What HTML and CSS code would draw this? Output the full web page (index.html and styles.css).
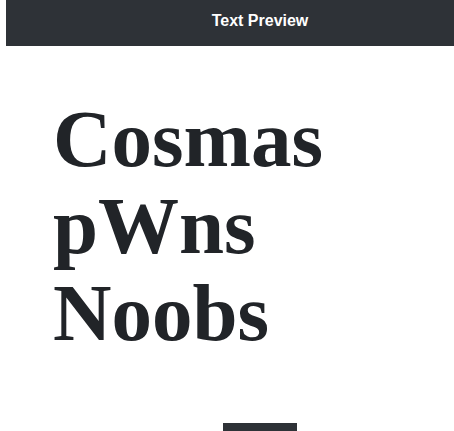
FILE: index.html
```html
<!DOCTYPE html>
<html>
<head>
<meta charset="utf-8">
<link rel="stylesheet" href="styles.css">
</head>
<body>
<div class="page">
  <header class="topbar">Text Preview</header>
  <main class="content">
    <h1 class="preview">Cosmas<br>pWns<br>Noobs</h1>
    <div class="bar-row"><div class="bar"></div></div>
  </main>
</div>
</body>
</html>
```

FILE: styles.css
```css
html, body {
  margin: 0;
  padding: 0;
  background: #ffffff;
  overflow: hidden;
}
.page {
  margin-left: 6px;
}
.topbar {
  height: 46px;
  box-sizing: border-box;
  padding-left: 60px;
  padding-bottom: 5px;
  background: #2e3237;
  color: #ffffff;
  display: flex;
  align-items: center;
  justify-content: center;
  font-family: "Liberation Sans", Arial, sans-serif;
  font-weight: bold;
  font-size: 16px;
}
.content {
  display: flex;
  flex-direction: column;
}
.preview {
  margin: 50px 0 0 0;
  padding-left: 47px;
  font-family: "Liberation Serif", serif;
  font-weight: bold;
  font-size: 81px;
  line-height: 87px;
  color: #212428;
}
.bar-row {
  display: flex;
  justify-content: center;
  padding-left: 60px;
  margin-top: 66px;
}
.bar {
  width: 74px;
  height: 10px;
  background: #2e3237;
}
```
